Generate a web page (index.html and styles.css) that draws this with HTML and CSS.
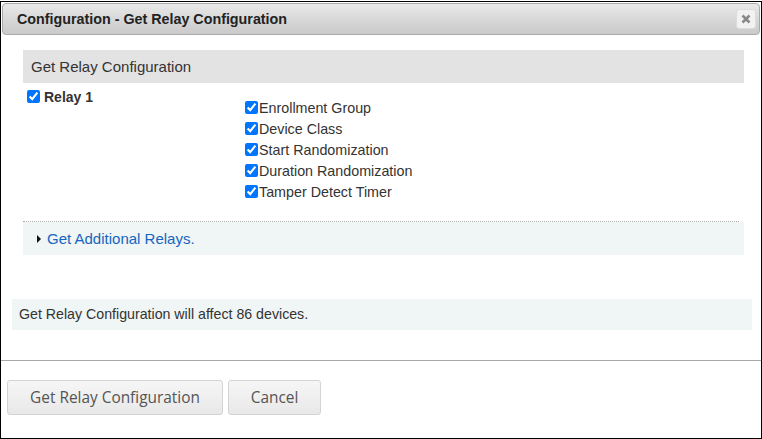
FILE: index.html
```html
<!DOCTYPE html>
<html>
<head>
<meta charset="utf-8">
<link rel="stylesheet" href="styles.css">
</head>
<body>
<div class="dialog">
  <div class="titlebar">
    <span class="title">Configuration - Get Relay Configuration</span>
    <button class="close" type="button" aria-label="close">
      <svg width="10" height="10" viewBox="0 0 10 10"><path d="M1.5 1.5 L8.5 8.5 M8.5 1.5 L1.5 8.5" stroke="#888" stroke-width="2.6" stroke-linecap="butt"/></svg>
    </button>
  </div>
  <div class="content">
    <div class="fieldset">
      <div class="section-head">Get Relay Configuration</div>
      <div class="relay">
        <label class="relay-label"><input type="checkbox" checked><span>Relay 1</span></label>
        <div class="options">
          <label class="opt"><input type="checkbox" checked><span>Enrollment Group</span></label>
          <label class="opt"><input type="checkbox" checked><span>Device Class</span></label>
          <label class="opt"><input type="checkbox" checked><span>Start Randomization</span></label>
          <label class="opt"><input type="checkbox" checked><span>Duration Randomization</span></label>
          <label class="opt"><input type="checkbox" checked><span>Tamper Detect Timer</span></label>
        </div>
      </div>
      <div class="divider"></div>
      <div class="more"><span class="tri"></span><a class="link" href="#">Get Additional Relays.</a></div>
    </div>
    <div class="info">Get Relay Configuration will affect 86 devices.</div>
  </div>
  <div class="footer">
    <button class="btn btn-primary" type="button">Get Relay Configuration</button>
    <button class="btn btn-cancel" type="button">Cancel</button>
  </div>
</div>
</body>
</html>
```
FILE: styles.css
```css
html, body {
  margin: 0;
  padding: 0;
  background: #fff;
}
body {
  font-family: "Liberation Sans", Arial, sans-serif;
  color: #333;
}
.dialog {
  box-sizing: border-box;
  margin-top: 1px;
  width: 762px;
  height: 438px;
  border: 1px solid #000;
  background: #fff;
}
.titlebar {
  box-sizing: border-box;
  margin: 1px;
  height: 32px;
  border: 1px solid #aaa;
  border-radius: 4px;
  background: linear-gradient(to bottom, #e9e9e9 0%, #d8d8d8 50%, #cacaca 100%);
  display: flex;
  align-items: center;
  justify-content: space-between;
  padding: 0 3px 0 14px;
}
.title {
  font-weight: bold;
  font-size: 14.3px;
  color: #222;
}
.close {
  box-sizing: border-box;
  width: 20px;
  height: 20px;
  padding: 0;
  border: 1px solid #dcdcdc;
  border-radius: 3px;
  background: #f2f2f2;
  display: flex;
  align-items: center;
  justify-content: center;
}
.close svg { display: block; }
.content {
  padding: 0 9px 0 11px;
}
.fieldset {
  margin: 15px 0 0 11px;
  width: 721px;
}
.section-head {
  height: 33px;
  line-height: 33px;
  background: #e3e3e3;
  padding-left: 8px;
  font-size: 15px;
  color: #333;
}
.relay {
  display: flex;
  align-items: flex-start;
  padding-top: 7px;
}
.relay-label {
  box-sizing: border-box;
  width: 222px;
  padding-left: 4px;
  display: flex;
  align-items: center;
  font-weight: bold;
  font-size: 14px;
  color: #333;
  height: 13px;
}
.relay-label input {
  margin: 0 4px 0 0;
  width: 13px;
  height: 13px;
}
.options {
  margin-top: 7px;
  display: flex;
  flex-direction: column;
}
.opt {
  height: 21px;
  display: flex;
  align-items: center;
  font-size: 14.3px;
  color: #333;
}
.opt input {
  margin: 0 1px 0 0;
  width: 13px;
  height: 13px;
}
.divider {
  margin-top: 19px;
  margin-right: 5px;
  border-top: 1px dotted #aaa;
}
.more {
  height: 33px;
  background: #f0f5f5;
  display: flex;
  align-items: center;
  padding-left: 14px;
}
.tri {
  width: 0;
  height: 0;
  border-top: 4px solid transparent;
  border-bottom: 4px solid transparent;
  border-left: 4px solid #111;
  margin-right: 6px;
}
.link {
  color: #1565c0;
  text-decoration: none;
  font-size: 15px;
}
.info {
  margin-top: 44px;
  height: 31px;
  line-height: 31px;
  background: #f0f5f5;
  padding-left: 7px;
  font-size: 14.2px;
  color: #333;
}
.footer {
  margin-top: 30px;
  border-top: 1px solid #aaa;
  padding: 19px 0 0 6px;
  display: flex;
  gap: 5px;
}
.btn {
  box-sizing: border-box;
  height: 35px;
  border: 1px solid #d3d3d3;
  border-radius: 3px;
  background: linear-gradient(to bottom, #f6f6f6 0%, #e8e8e8 100%);
  font-family: "Open Sans", "DejaVu Sans", sans-serif;
  font-size: 15.4px;
  color: #555;
  padding: 0;
}
.btn-primary { width: 216px; }
.btn-cancel { width: 93px; }
```
